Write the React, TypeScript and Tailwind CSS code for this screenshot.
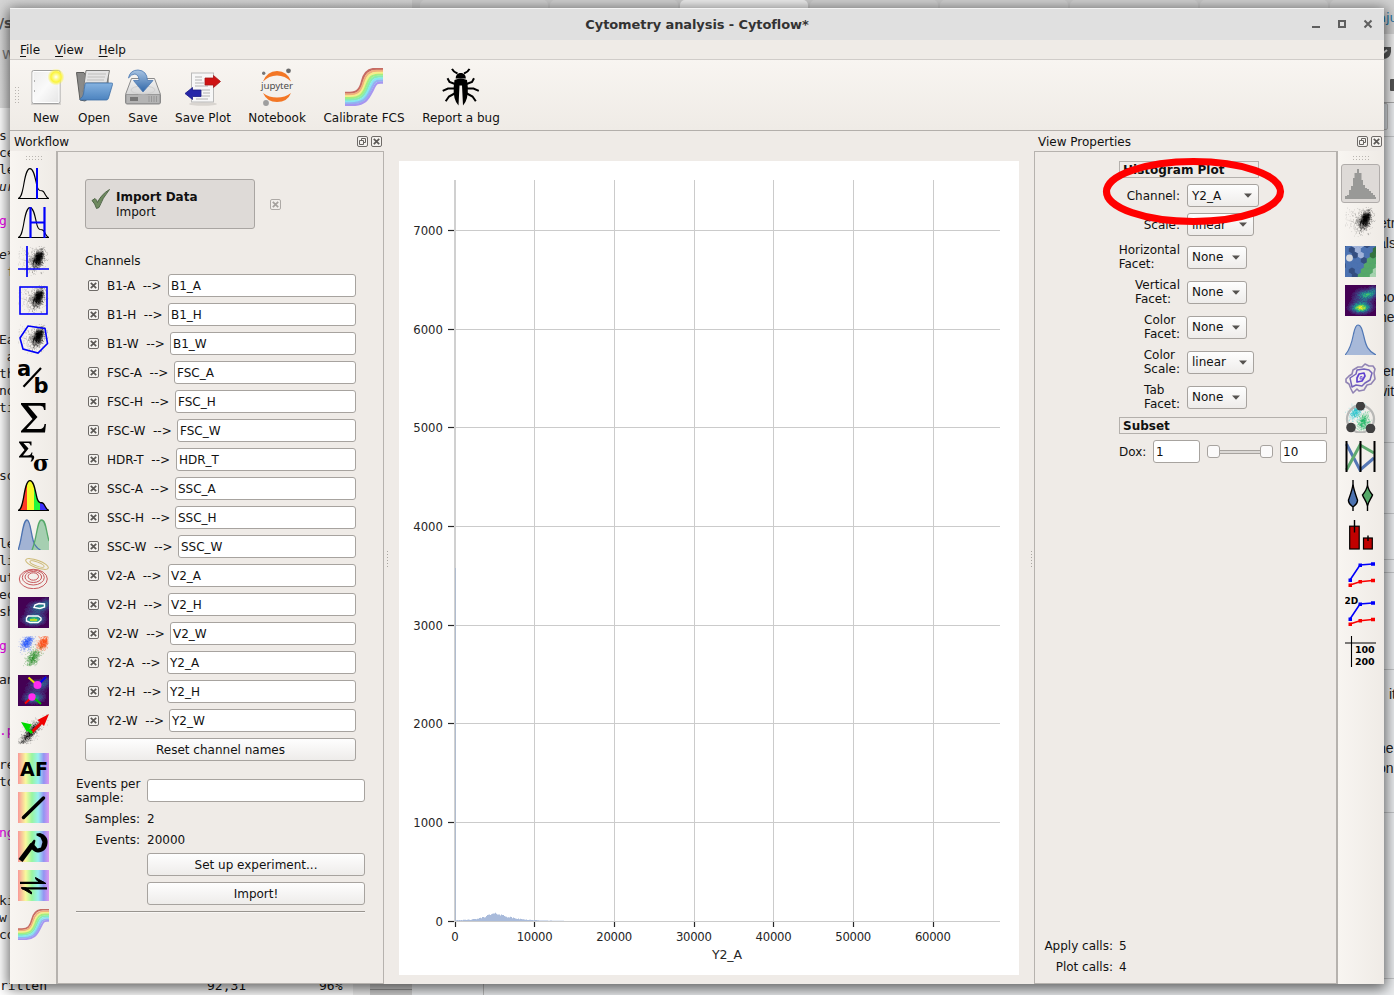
import React from "react";

/* ---------- helpers ---------- */

function makeRandom(seed: number) {
  let s = seed;
  return () => {
    s = (s * 1664525 + 1013904223) % 4294967296;
    return s / 4294967296;
  };
}

type CloudProps = { n: number; cx: number; cy: number; sx: number; sy: number; tilt?: number; color?: string; seed?: number; opacity?: number };

function Cloud({ n, cx, cy, sx, sy, tilt = 0, color = "#000", seed = 7, opacity = 0.45 }: CloudProps) {
  const rnd = makeRandom(seed);
  let d = "";
  for (let i = 0; i < n; i++) {
    const r = Math.sqrt(-2 * Math.log(rnd() + 0.0001));
    const a = rnd() * Math.PI * 2;
    const u = r * Math.cos(a) * sx;
    const v = r * Math.sin(a) * sy;
    const x = cx + u * Math.cos(tilt) - v * Math.sin(tilt);
    const y = cy + u * Math.sin(tilt) + v * Math.cos(tilt);
    if (x < 0 || x > 30 || y < 0 || y > 30) continue;
    d += `M${x.toFixed(1)} ${y.toFixed(1)}h.6`;
  }
  return <path d={d} stroke={color} strokeWidth="0.6" opacity={opacity} fill="none" />;
}

function BlackCloud() {
  return (
    <g>
      <Cloud n={240} cx={15} cy={14} sx={7} sy={7} seed={5} opacity={0.3} />
      <Cloud n={700} cx={19.5} cy={13.5} sx={5} sy={3.2} tilt={-1.2} seed={11} opacity={0.55} />
      <Cloud n={500} cx={20.5} cy={12} sx={3.6} sy={2} tilt={-1.2} seed={23} opacity={0.7} />
    </g>
  );
}

const viridis = [
  [68, 1, 84],
  [65, 52, 124],
  [47, 95, 140],
  [33, 145, 140],
  [53, 183, 121],
  [144, 215, 67],
  [253, 231, 37],
];

function HeatMap({ gain = 1 }: { gain?: number }) {
  const rnd = makeRandom(3);
  const cells: React.ReactNode[] = [];
  const g = (x: number, y: number, cx: number, cy: number, sx: number, sy: number) =>
    Math.exp(-(((x - cx) / sx) ** 2) - ((y - cy) / sy) ** 2);
  for (let y = 0; y < 31; y++)
    for (let x = 0; x < 31; x++) {
      let v = 0.85 * g(x, y, 15, 22.5, 8, 4) + 0.5 * g(x, y, 22, 9, 7, 3.6) + 0.3 * g(x, y, 17, 15, 9, 9) + 0.3 * g(x, y, 28, 5, 4, 4);
      v = Math.min(0.999, Math.max(0, (v + (rnd() - 0.5) * 0.2 * Math.min(1, v * 3)) * gain));
      if (v < 0.05) continue;
      const p = v * 6;
      const i = Math.floor(p);
      const f = p - i;
      const c = viridis[i].map((a, k) => Math.round(a + (viridis[Math.min(6, i + 1)][k] - a) * f));
      cells.push(<rect key={y * 31 + x} x={x} y={y} width="1.05" height="1.05" fill={`rgb(${c.join(",")})`} />);
    }
  return (
    <g>
      <rect width="31" height="31" fill="#440154" />
      {cells}
    </g>
  );
}

function Icon({ children }: { children: React.ReactNode }) {
  return (
    <svg width="31" height="31" viewBox="0 0 31 31" className="block shrink-0 overflow-hidden">
      {children}
    </svg>
  );
}

const curve = "M0 30.5C3 30 4 26 5.5 18C7 9 8.5 .6 12 .6C15.5 .6 17 9 18.5 16C19.3 20 20 22 22 22.5C25.5 22.5 26 24 27.5 27C28.5 29 29.5 30 31 30.5";

function RainbowPad({ children, id }: { children: React.ReactNode; id: string }) {
  return (
    <Icon>
      <defs>
        <linearGradient id={id}>
          <stop offset="0" stopColor="#f99898" />
          <stop offset="0.25" stopColor="#f9f99c" />
          <stop offset="0.45" stopColor="#98f5a0" />
          <stop offset="0.65" stopColor="#98f0f0" />
          <stop offset="0.83" stopColor="#9494f2" />
          <stop offset="1" stopColor="#dd98ee" />
        </linearGradient>
      </defs>
      <rect width="31" height="31" fill={`url(#${id})`} />
      {children}
    </Icon>
  );
}

function RainbowCurve({ size }: { size: number }) {
  const bands = ["#c66b63", "#f0b07c", "#f5ee8a", "#a5ee80", "#86ecb0", "#86e6f0", "#90b4f2", "#a696f0"];
  return (
    <svg width={size} height={size} viewBox="0 0 31 31" className="block">
      {bands.map((c, i) => (
        <path
          key={c}
          d={`M0 ${20.2 + i * 1.45}H4C${10 + i * 0.9} ${20.2 + i * 1.45} ${12.5 + i * 0.9} ${17 + i * 1.25} ${14 + i * 1.15} ${10.5 + i * 1.25}S${19 + i * 0.9} ${0.7 + i * 1.6} ${25 + i * 0.6} ${0.7 + i * 1.6}H31`}
          fill="none"
          stroke={c}
          strokeWidth="1.8"
        />
      ))}
    </svg>
  );
}

/* ---------- operation icons (left toolbar) ---------- */

const leftIcons = [
  <Icon key="threshold">
    <path d={curve} fill="none" stroke="#000" strokeWidth="1.1" />
    <path d="M0 30.5H31" stroke="#000" />
    <path d="M19 0V31" stroke="#0000fa" strokeWidth="2" />
  </Icon>,
  <Icon key="range">
    <path d={curve} fill="none" stroke="#000" strokeWidth="1.1" />
    <path d="M0 30.5H31" stroke="#000" />
    <path d="M12.5 0V31M26.5 0V31M12.5 15.5H26.5" stroke="#0000fa" strokeWidth="2.2" />
  </Icon>,
  <Icon key="quad">
    <BlackCloud />
    <path d="M9 0V31M0 23H31" stroke="#0000fa" strokeWidth="1.7" />
  </Icon>,
  <Icon key="rect">
    <BlackCloud />
    <rect x="2" y="2" width="27" height="27" fill="none" stroke="#0000fa" strokeWidth="1.6" />
  </Icon>,
  <Icon key="poly">
    <BlackCloud />
    <path d="M10 2L27 4.5L29.5 19.5L20 29L5 25L2 14Z" fill="none" stroke="#0000fa" strokeWidth="1.6" />
  </Icon>,
  <Icon key="ratio">
    <text x="-1" y="13" fontSize="21" fontWeight="bold" fontFamily="DejaVu Sans">a</text>
    <text x="15.5" y="30" fontSize="21" fontWeight="bold" fontFamily="DejaVu Sans">b</text>
    <path d="M5.5 23.7L23 5" stroke="#000" strokeWidth="2.2" />
  </Icon>,
  <Icon key="sum">
    <path d="M3 1H27.500V8H26C25.500 4.500 24.500 3.800 21 3.800H10L19.500 15L8.500 27H21C25 27 26 25.500 26.500 22H28L27 30.500H3V29L14.500 17L3 2.500Z" />
  </Icon>,
  <Icon key="stat">
    <path d="M1 .5H13.500V4.500H12.500C12 2.500 11.500 2 9 2H5.500L10.500 7.500L5 14.500H9C12 14.500 13 13.500 13.500 11.500H14.500L13.500 16.500H1V15.500L6.500 9L1 1.500Z" />
    <text x="15" y="30" fontSize="22" fontWeight="bold" fontFamily="DejaVu Serif">σ</text>
    <path d="M13 14.500C16 13.500 18 16.500 14 20.500L12.500 20.500C14 18.500 14 17 13 16Z" />
  </Icon>,
  <Icon key="bins">
    <defs>
      <clipPath id="binClip"><path d={curve} /></clipPath>
    </defs>
    <g clipPath="url(#binClip)">
      <rect width="9" height="31" fill="#ff3a24" />
      <rect x="9" width="7" height="31" fill="#f6fa2a" />
      <rect x="16" width="6" height="31" fill="#24f53c" />
      <rect x="22" width="9" height="31" fill="#3c30fa" />
    </g>
    <path d={curve} fill="none" stroke="#000" strokeWidth="1.3" />
    <path d="M0 30.5H31" stroke="#000" />
  </Icon>,
  <Icon key="gauss1d">
    <path d="M0 31C4 22 4.500 1 9 1C13 1 13 20 17 26C19 29 20 30 22.500 31Z" fill="#a2b3d4" />
    <path d="M14 31C19 20 19 1 23.500 1C28 1 28 12 31 22V31Z" fill="#9dcbab" fillOpacity=".9" />
    <path d="M0 31C4 22 4.500 1 9 1C13 1 13 20 17 26C19 29 20 30 22.500 31" fill="none" stroke="#4c72b0" strokeWidth="1.300" />
    <path d="M14 31C19 20 19 1 23.500 1C28 1 28 12 31 22" fill="none" stroke="#55a868" strokeWidth="1.300" />
  </Icon>,
  <Icon key="gauss2d">
    <g fill="none" stroke="#ccb974" strokeWidth="1">
      <ellipse cx="19" cy="6" rx="12" ry="3.700" transform="rotate(20 19 6)" />
      <ellipse cx="19" cy="6" rx="7.500" ry="2" transform="rotate(20 19 6)" />
    </g>
    <g fill="none" stroke="#c85a5e" strokeWidth="1">
      <ellipse cx="15.300" cy="21" rx="14" ry="9.700" />
      <ellipse cx="15.300" cy="19.500" rx="11" ry="7.500" />
      <ellipse cx="15.300" cy="19" rx="8.300" ry="5.500" />
      <ellipse cx="15.300" cy="18.500" rx="5.200" ry="3.700" />
    </g>
  </Icon>,
  <Icon key="density">
    <HeatMap gain={0.75} />
    <path d="M10 19H20L23 21V23L20 25.500H12L8.500 24V21ZM17 8L21 6.500L26.500 7V10L22 11.500L16 10.500Z" fill="none" stroke="#fff" strokeWidth="1.400" />
    <path d="M12 23H19" stroke="#b8d830" strokeWidth="2" />
  </Icon>,
  <Icon key="kmeans">
    <Cloud n={500} cx={9} cy={7} sx={4} sy={2.6} tilt={-1} color="#2255ff" seed={2} opacity={0.7} />
    <Cloud n={500} cx={25} cy={7} sx={4} sy={2.6} tilt={-1} color="#ff4a10" seed={9} opacity={0.8} />
    <Cloud n={500} cx={15} cy={22} sx={5} sy={2.8} tilt={-1} color="#1e8a1e" seed={4} opacity={0.7} />
  </Icon>,
  <Icon key="flowpeaks">
    <HeatMap gain={0.55} />
    <path d="M10.500 2.500L18 9" stroke="#e8e000" strokeWidth="2" />
    <path d="M21 9L28 2" stroke="#0000f5" strokeWidth="2" />
    <path d="M14 22L7 28.500" stroke="#f00" strokeWidth="2" />
    <path d="M15 22L23 29" stroke="#00c000" strokeWidth="2" />
    <circle cx="19.500" cy="10" r="4" fill="#ff2cf0" />
    <circle cx="14" cy="22" r="3.700" fill="#ff2cf0" />
  </Icon>,
  <Icon key="pca">
    <Cloud n={340} cx={12} cy={19} sx={9} sy={3.4} tilt={-0.85} seed={5} opacity={0.4} />
    <Cloud n={600} cx={13} cy={18} sx={7} sy={1.8} tilt={-0.85} seed={15} opacity={0.7} />
    <path d="M14 18L26 6" stroke="#f00000" strokeWidth="3" />
    <path d="M31 0L19.500 6L26 12Z" fill="#f00000" />
    <path d="M14 19L9 14" stroke="#00dc00" strokeWidth="3" />
    <path d="M3 8L14 10.500L9 18Z" fill="#00dc00" />
  </Icon>,
  <RainbowPad key="af" id="padAf">
    <text x="2" y="22.500" fontSize="19" fontWeight="bold" fontFamily="DejaVu Sans" textLength="28">AF</text>
  </RainbowPad>,
  <RainbowPad key="bleed" id="padBleed">
    <path d="M5.500 25.500L25.500 6" stroke="#000" strokeWidth="3.500" strokeLinecap="round" />
  </RainbowPad>,
  <RainbowPad key="bead" id="padBead">
    <path d="M4 27.500L13 15.500" stroke="#000" strokeWidth="5" strokeLinecap="square" />
    <path d="M11.500 14L16 8.500L17.500 9.500L16.500 14L19.500 17.500L23 16.500L24.500 11L22.500 6.500L18.500 4.500V2.500L22 2C27.500 3.500 30 7.500 29.500 12C29 18 25 21.500 20 21.500C18 21.500 16 20.500 14 18.500Z" />
  </RainbowPad>,
  <RainbowPad key="color" id="padColor">
    <path d="M2 12.800H26M4 18.300H29" stroke="#000" strokeWidth="2.200" fill="none" />
    <path d="M17.500 7.500L28 13.500H23L18 9.500ZM13.500 24L3 17.800H8L13.500 22Z" stroke="#000" />
  </RainbowPad>,
  <RainbowCurve key="calib" size={31} />,
];

/* ---------- view icons (right toolbar) ---------- */

const histIcon = (
  <Icon>
    <path d="M0 31V28H2V27H4V22H6V18H8V10H9.500V5H12V1H14V5H16.500V12H18V17H20V20H22V21H24V23H26V25H28V27H30V29H31V31Z" fill="#999997" />
  </Icon>
);

const hexes: [number, number, string][] = [];
for (let r = 0; r < 7; r++)
  for (let c = 0; c < 7; c++) {
    const x = c * 6 - (r % 2 ? 0 : 3) + 1;
    const y = r * 5.2 - 1;
    const k = x * 0.85 + y * 0.6;
    const col =
      k > 38 ? "#a6d3ae" : k > 30 ? "#55a868" : k > 27 ? "#35733f" : (r * 3 + c * 5) % 4 === 0 ? "#344e80" : x > 4 && x < 18 && y < 13 ? "#a0b3d9" : "#4c72b0";
    hexes.push([x, y, col]);
  }

const trendLines = (
  <g>
    <path d="M5 22L15 7L27.500 6" fill="none" stroke="#0000fa" strokeWidth="1.600" />
    <path d="M3.500 20.500h3.500v3.500h-3.500zM13.500 5.500h3.500v3.500h-3.500zM26 4.300h4v3.500h-4z" fill="#0000fa" />
    <path d="M5 27L15 23.800L27.500 22.500" fill="none" stroke="#fa0000" strokeWidth="1.600" />
    <path d="M3.500 25.500h3.500v3.500h-3.500zM13.500 22h3.500v3.500h-3.500zM26 20.800h4v3.500h-4z" fill="#fa0000" />
  </g>
);

const rightIcons = [
  <Icon key="scatter"><BlackCloud /></Icon>,
  <Icon key="hex">
    <rect width="31" height="31" fill="#4c72b0" />
    {hexes.map(([x, y, c], i) => (
      <path key={i} d={`M${x} ${y - 3.6}l3.200 1.800v3.600l-3.200 1.800l-3.200-1.800v-3.600z`} fill={c} />
    ))}
    <circle cx="4.500" cy="12" r="3.400" fill="#d8dade" />
  </Icon>,
  <Icon key="heat"><HeatMap /></Icon>,
  <Icon key="kde">
    <path d="M0 31C5 26 7 18 8.500 10C10 3 11 1 13 1C16 1 17 5 19 13C21 22 23 27 31 31Z" fill="#a7b9d9" />
    <path d="M0 31C5 26 7 18 8.500 10C10 3 11 1 13 1C16 1 17 5 19 13C21 22 23 27 31 31" fill="none" stroke="#5077b5" strokeWidth="1.200" />
  </Icon>,
  <Icon key="contour">
    <g fill="none" strokeLinejoin="round">
      <path d="M1 16L4 13L7 11L8 7L13 4L17 4L20 1L24 3L28 3L30 6L29 10L30 16L26 21L22 22L19 27L14 28L12 26L8 30L6 26L4 21L1 19Z" stroke="#9184b4" strokeWidth="1.600" />
      <path d="M5 15L11 11L12 7L19 6L24 7L27 10L25 17L20 20L17 23L11 22L7 24Z" stroke="#7564ba" strokeWidth="1.500" />
      <path d="M14 11L19 10L20 13L17 18L12 19L12 15Z" stroke="#5f40d0" strokeWidth="1.700" />
      <path d="M15.500 13.500H17V16H15Z" stroke="#5f40d0" strokeWidth=".8" />
    </g>
  </Icon>,
  <Icon key="radviz">
    <Cloud n={420} cx={11} cy={10} sx={4.6} sy={2.6} tilt={-1} color="#1fc4cf" seed={2} opacity={0.8} />
    <Cloud n={420} cx={18} cy={20} sx={4} sy={2.8} tilt={-1.2} color="#18b860" seed={8} opacity={0.8} />
    <circle cx="15.500" cy="17" r="13.500" fill="none" stroke="#b8b8b6" strokeWidth="2.300" />
    <circle cx="15.500" cy="4" r="4.600" fill="#404040" />
    <circle cx="6" cy="25.500" r="4.800" fill="#404040" />
    <circle cx="25.500" cy="26.500" r="4.800" fill="#404040" />
  </Icon>,
  <Icon key="parallel">
    <path d="M1.500 3L15 29L29 17" stroke="#5577b5" strokeWidth="3" fill="none" />
    <path d="M1.500 29L15 4L29 12" stroke="#5faa70" strokeWidth="3" fill="none" />
    <path d="M1.500 0V31M15.500 0V31M29.500 0V31" stroke="#000" strokeWidth="2" />
  </Icon>,
  <Icon key="violin">
    <path d="M8 0V4C8.500 9 10 13 12.500 20C13 24 9 26 8 27V31M8 0V4C7.500 9 6 13 3.500 20C3 24 7 26 8 27" fill="#4c72b0" stroke="#000" strokeWidth="1.400" />
    <path d="M22.500 0V5C23 9 25 12 27.500 15C26 19 23.500 21 22.500 26V31M22.500 0V5C22 9 20 12 17.500 15C19 19 21.500 21 22.500 26" fill="#55a868" stroke="#000" strokeWidth="1.400" />
  </Icon>,
  <Icon key="bar">
    <rect x="4.700" y="7.200" width="9.500" height="22.800" fill="#c00000" stroke="#000" strokeWidth="1.200" />
    <rect x="18.500" y="19" width="8.800" height="11" fill="#c00000" stroke="#000" strokeWidth="1.200" />
    <path d="M9.500 1V13.500M23 16.500V22" stroke="#000" strokeWidth="1.400" />
  </Icon>,
  <Icon key="stats1d">{trendLines}</Icon>,
  <Icon key="stats2d">
    <text x="-.5" y="7" fontSize="9" fontWeight="bold" fontFamily="DejaVu Sans">2D</text>
    {trendLines}
  </Icon>,
  <Icon key="table">
    <path d="M0 7H31M6.500 0V31" stroke="#000" strokeWidth="1.100" />
    <text x="10" y="17" fontSize="9.500" fontWeight="bold" fontFamily="DejaVu Sans" textLength="19.500">100</text>
    <text x="10" y="28.500" fontSize="9.500" fontWeight="bold" fontFamily="DejaVu Sans" textLength="19.500">200</text>
  </Icon>,
];

/* ---------- main toolbar icons ---------- */

const NewIcon = (
  <svg width="36" height="38" viewBox="0 0 36 38" className="block">
    <defs>
      <linearGradient id="pageG" x1="0" y1="0" x2="1" y2="1"><stop offset="0" stopColor="#ececec" /><stop offset=".5" stopColor="#fafafa" /><stop offset="1" stopColor="#e4e4e4" /></linearGradient>
      <radialGradient id="sunG"><stop offset="0" stopColor="#fff" /><stop offset=".25" stopColor="#fdfca0" /><stop offset=".6" stopColor="#fbf43c" /><stop offset="1" stopColor="#fbf43c" stopOpacity="0" /></radialGradient>
    </defs>
    <rect x="3" y="35" width="30" height="2" fill="#d6d3cf" />
    <rect x="4" y="2.500" width="28" height="33" rx="1.500" fill="url(#pageG)" stroke="#a0a0a0" />
    <rect x="5" y="3.500" width="26" height="31" rx="1" fill="none" stroke="#fff" />
    <path d="M6.500 12v2M6.500 22v2" stroke="#b0b0b0" />
    <circle cx="28" cy="9" r="8.500" fill="url(#sunG)" />
  </svg>
);

const OpenIcon = (
  <svg width="38" height="38" viewBox="0 0 38 38" className="block">
    <defs>
      <linearGradient id="foldG" x1="0" y1="0" x2="0" y2="1"><stop offset="0" stopColor="#86b3e0" /><stop offset="1" stopColor="#4c83bf" /></linearGradient>
    </defs>
    <path d="M1.500 4.500H9L10.500 7H33V16L10 33L5 32Z" fill="#8a8a88" stroke="#5d5d5b" />
    <path d="M11 2.500L34.500 2.500L31 20L8 24Z" fill="#e4e4e4" stroke="#7b7b79" />
    <path d="M13 6H31M12.500 9H30M12 12H29" stroke="#bdbdbb" strokeWidth="1.200" />
    <path d="M7 30L10 15H33" fill="none" stroke="#888" />
    <path d="M10 16.500C10.300 15.500 10.500 15 12 15H36.500C37.500 15 38 15.500 37.500 16.500L33.500 30C33 31.500 32.500 32 31 32H6C5 32 4.500 31 5.500 30.500Q8 29 8.500 26Z" fill="url(#foldG)" stroke="#3e6ea6" strokeWidth=".8" />
  </svg>
);

const SaveIcon = (
  <svg width="38" height="38" viewBox="0 0 38 38" className="block">
    <defs>
      <linearGradient id="diskG" x1="0" y1="0" x2="0" y2="1"><stop offset="0" stopColor="#f4f4f4" /><stop offset="1" stopColor="#c2c2c2" /></linearGradient>
      <linearGradient id="arrG" x1="0" y1="0" x2="0" y2="1"><stop offset="0" stopColor="#a8c4e2" /><stop offset="1" stopColor="#2f66a8" /></linearGradient>
    </defs>
    <path d="M7.500 10.500H30.500L36.500 26.500V34Q36.500 36 35 36H3Q1.500 36 1.500 34V26.500Z" fill="url(#diskG)" stroke="#8b8b8b" />
    <path d="M2 26.500H36V34.500Q36 35.500 35 35.500H3Q2 35.500 2 34.500Z" fill="#b4b4b4" stroke="#888" strokeWidth=".7" />
    <ellipse cx="19" cy="22" rx="12" ry="4" fill="none" stroke="#cfcfcf" />
    <path d="M6 29H14V33H6Z" fill="#777" />
    <path d="M25 28V34M27.500 28V34M30 28V34M32.500 28V34" stroke="#989898" />
    <path d="M4.500 10Q6 2 14 2Q23 2.500 23.500 12.500H29L19 24L9.500 12.500H15Q15 7 11 6Q7.500 6 4.500 10Z" fill="url(#arrG)" stroke="#4b78b2" strokeWidth=".8" />
  </svg>
);

const SavePlotIcon = (
  <svg width="38" height="38" viewBox="0 0 38 38" className="block">
    <ellipse cx="19" cy="36" rx="14" ry="1.800" fill="#d9d5d0" />
    <rect x="7.500" y="5" width="22" height="29" fill="#f7f7f7" stroke="#b9b9b9" />
    <path d="M11 9H18M11 12H18M11 15H20M11 18H24M17 22H26M19 25H26M17 28H26M12 31H24" stroke="#b3b3b3" strokeWidth="1.100" />
    <path d="M21 10H29.500V7.500L36.500 13.500L29.500 19.500V17H21Z" fill="#cf1414" stroke="#a61818" strokeWidth=".8" />
    <path d="M17 22H8.500V19.500L1 25.500L8.500 31.500V28.500H17Z" fill="#2626a8" stroke="#1c1c86" strokeWidth=".8" />
  </svg>
);

const JupyterIcon = (
  <svg width="36" height="38" viewBox="0 0 36 38" className="block">
    <path d="M4 13.500Q8 3 18 3Q28.500 3 32 13.500Q26 7.500 18 7.500Q10 7.500 4 13.500ZM4 25Q8 34 18 34Q28.500 34 32 25Q26 29.500 18 29.500Q10 29.500 4 25Z" fill="#f37726" />
    <circle cx="29.500" cy="2.800" r="2.400" fill="#6b6b6b" />
    <circle cx="4.700" cy="5.300" r="1.700" fill="#767677" />
    <circle cx="7" cy="35" r="2.900" fill="#9e9e9e" />
    <text x="2" y="20.800" fontSize="9.800" fontFamily="Noto Sans" fill="#4e4e4e" textLength="32">jupyter</text>
  </svg>
);

const BugIcon = (
  <svg width="38" height="38" viewBox="0 0 38 38" className="block">
    <g stroke="#000" strokeWidth="2" fill="none">
      <path d="M10 .8Q11.500 4 15.500 5.500M27.500 .8Q26 4 22 5.500M13 16L7.500 14L5.500 10.300M24.500 16L30 14L32 10.300M12.500 20.500L6 20.500L.7 22.800M25 20.500L31.500 20.500L36.800 22.800M13.500 25L7 28.500L3.700 33.200M24 25L30.500 28.500L33.800 33.200" />
    </g>
    <path d="M13.700 10.500C13.500 3.200 24 3.200 23.800 10.500Z" />
    <path d="M12.500 12Q18.700 9 25 12L25.800 19Q26.500 32 21 37.500L20 17.500H17.500L16.500 37.500Q11 32 11.700 19Z" />
  </svg>
);

const toolbar = [
  { label: "New", icon: NewIcon, cls: "w-[46px]" },
  { label: "Open", icon: OpenIcon, cls: "w-[50px]" },
  { label: "Save", icon: SaveIcon, cls: "w-[48px]" },
  { label: "Save Plot", icon: SavePlotIcon, cls: "w-[72px]" },
  { label: "Notebook", icon: JupyterIcon, cls: "w-[76px]" },
  { label: "Calibrate FCS", icon: <RainbowCurve size={38} />, cls: "w-[98px]" },
  { label: "Report a bug", icon: BugIcon, cls: "w-[96px]" },
];

/* ---------- small widgets ---------- */

function CloseBox({ faded = false }: { faded?: boolean }) {
  return (
    <svg width="11" height="11" viewBox="0 0 11 11" className={faded ? "block shrink-0 opacity-50" : "block shrink-0"}>
      <rect x=".5" y=".5" width="10" height="10" rx="1.500" fill="#f4f2ef" stroke="#6e6a67" />
      <path d="M2.800 2.800L8.200 8.200M8.200 2.800L2.800 8.200" stroke="#5b5855" strokeWidth="1.700" />
    </svg>
  );
}

function FloatBox() {
  return (
    <svg width="11" height="11" viewBox="0 0 11 11" className="block shrink-0">
      <rect x=".5" y=".5" width="10" height="10" rx="1.500" fill="#f4f2ef" stroke="#6e6a67" />
      <path d="M4.500 4.500V2.500H8.500V6.500H6.500M2.500 4.500H6.500V8.500H2.500Z" fill="none" stroke="#66625f" />
    </svg>
  );
}

function DockTitle({ text }: { text: string }) {
  return (
    <div className="flex h-5 shrink-0 items-center pl-1 pr-[2px]">
      <span className="flex-1 pt-[2px]">{text}</span>
      <div className="flex gap-[3px]">
        <FloatBox />
        <CloseBox />
      </div>
    </div>
  );
}

function Grip({ vertical = false }: { vertical?: boolean }) {
  const dots = [0, 1, 2, 3, 4, 5];
  return vertical ? (
    <svg width="5" height="17" className="block" fill="#b9b5b0">
      {dots.map((i) => <path key={i} d={`M0 ${i * 3}h1v1h-1zM3 ${i * 3}h1v1h-1z`} />)}
    </svg>
  ) : (
    <svg width="17" height="4" className="block" fill="#b9b5b0">
      {dots.map((i) => <path key={i} d={`M${i * 3} 0h1v1h-1zM${i * 3} 3h1v1h-1z`} />)}
    </svg>
  );
}

function SplitGrip() {
  return (
    <svg width="1" height="16" className="block" fill="#aaa6a1">
      {[0, 1, 2, 3, 4, 5].map((i) => <rect key={i} y={i * 3} width="1" height="1" />)}
    </svg>
  );
}

function Field({ children, className = "" }: { children?: React.ReactNode; className?: string }) {
  return (
    <div className={`flex h-[23px] items-center rounded-[3px] border border-[#a7a39f] bg-white pl-[2px] ${className}`}>{children}</div>
  );
}

function Button({ children, className = "" }: { children: React.ReactNode; className?: string }) {
  return (
    <div className={`flex h-[23px] items-center justify-center rounded-[3px] border border-[#a7a39f] bg-linear-to-b from-[#fefefe] to-[#eeecea] ${className}`}>
      {children}
    </div>
  );
}

function Combo({ value, className }: { value: string; className: string }) {
  return (
    <div className={`flex h-[23px] items-center justify-between rounded-[3px] border border-[#a7a39f] bg-linear-to-b from-[#fefefe] to-[#eeecea] pl-1 pr-[6px] ${className}`}>
      <span>{value}</span>
      <svg width="8" height="5" className="block"><path d="M0 .5H8L4 4.800Z" fill="#55524f" /></svg>
    </div>
  );
}

/* ---------- panels ---------- */

const channels: [string, number][] = [
  ["B1-A", 61], ["B1-H", 61], ["B1-W", 63], ["FSC-A", 67], ["FSC-H", 68], ["FSC-W", 70], ["HDR-T", 69], ["SSC-A", 68],
  ["SSC-H", 68], ["SSC-W", 71], ["V2-A", 61], ["V2-H", 61], ["V2-W", 63], ["Y2-A", 60], ["Y2-H", 60], ["Y2-W", 62],
];

function WorkflowPanel() {
  return (
    <div className="flex flex-1 flex-col border-y border-r border-[#b6b2ae] pl-[18px] pr-[18px]">
      <div className="ml-[9px] mt-[27px] flex items-center gap-[15px]">
        <div className="flex h-[50px] w-[170px] rounded-[3px] border border-[#a9a5a2] bg-[#dedad7] pl-[5px] pt-[9px]">
          <svg width="20" height="20" viewBox="0 0 20 20" className="block shrink-0">
            <path d="M1 11.500L4 9.500Q6 11 6.500 13.500Q10 5.500 18.500 0.500Q11.500 9 8 18.500L5.500 19.500Q4 14.500 1 11.500Z" fill="#6f8a5f" stroke="#4a5f42" strokeWidth=".9" />
          </svg>
          <div className="ml-[5px] pt-[1px] leading-[15px]">
            <div className="font-bold">Import Data</div>
            <div>Import</div>
          </div>
        </div>
        <CloseBox faded />
      </div>
      <div className="ml-[9px] mt-[24px] h-[16px] leading-[16px]">Channels</div>
      <div className="ml-[12px] mt-[5px] flex flex-col gap-[6px]">
        {channels.map(([name, w]) => (
          <div key={name} className="flex h-[23px] items-center">
            <CloseBox />
            <div className="ml-2 shrink-0 whitespace-pre" style={{ width: w }}>{`${name}  -->`}</div>
            <Field className="mr-[9px] flex-1">{name.replace("-", "_")}</Field>
          </div>
        ))}
      </div>
      <Button className="ml-[9px] mr-[9px] mt-[6px]">Reset channel names</Button>
      <div className="mt-[16px] flex h-[28px]">
        <div className="w-[71px] leading-[14px]">Events per<br />sample:</div>
        <Field className="mt-[2px] flex-1" />
      </div>
      <div className="mt-[5px] flex h-[18px] items-center gap-[7px]">
        <span className="w-[64px] text-right">Samples:</span><span>2</span>
      </div>
      <div className="mt-[3px] flex h-[18px] items-center gap-[7px]">
        <span className="w-[64px] text-right">Events:</span><span>20000</span>
      </div>
      <Button className="ml-[71px] mt-[4px]">Set up experiment...</Button>
      <Button className="ml-[71px] mt-[6px]">Import!</Button>
      <div className="mt-[6px] h-[2px] border-t border-[#98948f] bg-[#f8f6f4]" />
    </div>
  );
}

const facets: [string[], string, string][] = [
  [["Horizontal", "Facet:"], "None", "w-[60px]"],
  [["Vertical", "Facet:"], "None", "w-[60px]"],
  [["Color", "Facet:"], "None", "w-[60px]"],
  [["Color", "Scale:"], "linear", "w-[67px]"],
  [["Tab", "Facet:"], "None", "w-[60px]"],
];

function ViewPanel() {
  return (
    <div className="flex flex-1 flex-col border-y border-l border-[#b6b2ae] pl-[84px] pr-[9px]">
      <div className="mt-[9px] h-[17px] w-[140px] border border-[#b4b0ac] pl-[3px] font-bold leading-[16px]">Histogram Plot</div>
      <div className="mt-[6px] flex h-[23px] items-center gap-[7px]">
        <span className="w-[61px] whitespace-nowrap text-right">Channel:</span>
        <Combo value="Y2_A" className="w-[72px]" />
      </div>
      <div className="mt-[6px] flex h-[23px] items-center gap-[7px]">
        <span className="w-[61px] text-right">Scale:</span>
        <Combo value="linear" className="w-[67px]" />
      </div>
      <div className="mt-[7px] flex flex-col gap-[7px]">
        {facets.map(([label, value, cls], i) => (
          <div key={i} className="flex h-[28px] items-center gap-[7px]">
            <div className="flex w-[61px] justify-end leading-[14px]">
              <div>{label[0]}<br />{label[1]}</div>
            </div>
            <Combo value={value} className={cls} />
          </div>
        ))}
      </div>
      <div className="mt-[6px] h-[17px] border border-[#b4b0ac] pl-[3px] font-bold leading-[16px]">Subset</div>
      <div className="mt-[6px] flex h-[23px] items-center">
        <span className="w-[34px]">Dox:</span>
        <Field className="w-[47px]">1</Field>
        <div className="ml-[7px] flex w-[66px] items-center">
          <div className="h-[13px] w-[13px] rounded-[3px] border border-[#a7a39f] bg-[#fbfafa]" />
          <div className="h-[4px] flex-1 border-y border-[#a7a39f] bg-[#dcd9d6]" />
          <div className="h-[13px] w-[13px] rounded-[3px] border border-[#a7a39f] bg-[#fbfafa]" />
        </div>
        <Field className="ml-[7px] w-[47px]">10</Field>
      </div>
      <div className="-ml-[78px] mt-auto mb-[7px] flex flex-col gap-[3px]">
        {[["Apply calls:", "5"], ["Plot calls:", "4"]].map(([k, v]) => (
          <div key={k} className="flex h-[18px] items-center gap-[6px]">
            <span className="w-[72px] whitespace-nowrap text-right">{k}</span><span>{v}</span>
          </div>
        ))}
      </div>
    </div>
  );
}

/* ---------- plot ---------- */

function histogramPath() {
  const rnd = makeRandom(42);
  let d = "M56 760";
  for (let x = 56; x < 165; x++) {
    const main = 4.4 * Math.exp(-(((x - 96) / 13) ** 2)) + 2.2 * Math.exp(-(((x - 106) / 26) ** 2)) + (x < 100 ? 0.8 : 0.2);
    const h = Math.max(0, main + (rnd() - 0.4) * Math.min(1.8, main * 0.4));
    d += `V${(760 - h).toFixed(1)}H${x + 1}`;
  }
  return d + "V760Z";
}

function Plot() {
  return (
    <svg width="620" height="814" className="block bg-white" fontFamily="DejaVu Sans" fontSize="11.700" fill="#262626">
      {[0, 1, 2, 3, 4, 5, 6].map((i) => {
        const x = Math.floor(56 + i * 79.7) + 0.5;
        return (
          <g key={i}>
            {i > 0 && <path d={`M${x} 19V760`} stroke="#cbcbcb" />}
            <path d={`M${x} 761V766`} stroke="#262626" strokeWidth="1.200" />
            <text x={56 + i * 79.65} y="780" textAnchor="middle" textLength={i ? 36 : undefined}>{i * 10000}</text>
          </g>
        );
      })}
      {[0, 1, 2, 3, 4, 5, 6, 7].map((i) => {
        const y = Math.floor(760 - i * 98.64) + 0.5;
        return (
          <g key={i}>
            {i > 0 && <path d={`M56 ${y}H601`} stroke="#cbcbcb" />}
            <path d={`M49 ${y}H55`} stroke="#262626" strokeWidth="1.200" />
            <text x="44" y={y + 4} textAnchor="end">{i * 1000}</text>
          </g>
        );
      })}
      <path d={histogramPath()} fill="#a9bbdb" />
      <path d="M56 19V761" stroke="#cbcbcb" strokeWidth="1.800" />
      <path d="M56.500 407V760" stroke="#b0bccf" strokeWidth="1" />
      <path d="M55 760.500H601" stroke="#cbcbcb" strokeWidth="1.200" />
      <text x="328" y="798" textAnchor="middle" fontSize="12.500" textLength="30">Y2_A</text>
    </svg>
  );
}

/* ---------- desktop behind the window ---------- */

const termLines: [number, string, string][] = [
  [135, "s", ""], [152, "ce", ""], [169, "le", ""], [186, "ur", "italic"], [220, "g", "text-[#f000f0]"], [254, "e*", "italic"], [271, " f", "text-[#b08030]"],
  [339, "Ea", ""], [356, " a", ""], [373, "th", ""], [390, "no", ""], [407, "ti", ""], [475, "so", ""], [543, "le", ""], [560, "li", ""], [577, "ut", ""],
  [594, "ec", ""], [611, "sh", ""], [645, "g", "text-[#f000f0]"], [679, "an", ""], [730, ".p", "text-[#f000f0]"], [764, "re", ""], [781, "to", ""],
  [832, "ng", "text-[#f000f0]"], [900, "ki", ""], [917, "w", ""], [934, "co", ""],
];

const pageLines: [number, number, string][] = [
  [1379, 223, "etr"], [1378, 243, "als"], [1379, 297, "oo"], [1379, 317, "ne"], [1383, 371, "en"], [1377, 391, "wit"], [1389, 694, "it"], [1378, 748, "ne"], [1378, 768, "on"],
];

const rules = [136, 442, 513, 559, 572, 669, 812, 978];

function Desktop() {
  return (
    <div className="absolute inset-0 bg-[#eceef0]">
      <div className="absolute left-0 top-0 h-[995px] w-[412px] bg-white">
        <div className="h-[108px] bg-linear-to-b from-[#d6d6d6] to-[#dedede]" />
        <div className="absolute -left-px top-[13px] text-[14px] font-bold text-[#555]">/s</div>
        <div className="absolute left-[2px] top-[45px] text-[13px] text-[#777]">W</div>
        <div className="absolute left-[353px] top-[980px] h-[15px] w-[17px] bg-[#eeeeee]" />
        <div className="absolute left-[370px] top-[980px] h-[15px] w-[42px] bg-[#cfcfcf]" />
        <div className="absolute left-[370px] top-[989px] h-px w-[42px] bg-[#999]" />
        {termLines.map(([y, t, cls]) => (
          <div key={y} style={{ top: y - 8 }} className={`absolute -left-px whitespace-pre font-['DejaVu_Sans_Mono',monospace] text-[13px] leading-[17px] text-[#222] ${cls}`}>{t}</div>
        ))}
        <div className="absolute left-0 top-[977px] flex whitespace-pre font-['DejaVu_Sans_Mono',monospace] text-[13px] leading-[17px] text-[#111]">
          <span className="w-[207px]">ritten</span>
          <span className="w-[112px]">92,31</span>
          <span>96%</span>
        </div>
      </div>
      <div className="absolute left-[412px] top-0 h-[8px] w-[982px] bg-[#c9c9c9]" />
      <div className="absolute left-[412px] top-0 flex h-[8px] w-[982px] gap-[2px] pl-[8px]">
        {[0, 1, 2, 3, 4, 5, 6, 7].map((i) => (
          <div key={i} className={i === 2 ? "h-[8px] w-[128px] shrink-0 rounded-t-[5px] bg-[#ededed]" : "h-[8px] w-[128px] shrink-0 rounded-t-[5px] bg-[#d2d2d2]"} />
        ))}
      </div>
      <div className="absolute left-[1384px] top-0 h-[34px] w-[10px] bg-[#d2d2d2]" />
      <div className="absolute left-[1384px] top-[34px] h-[69px] w-[10px] border-b border-[#aaa] bg-[#eeeeee]" />
      <div className="absolute left-[1378px] top-[8px] text-[13px] text-[#2277a8]">aju</div>
      <svg width="12" height="16" viewBox="0 0 12 16" className="absolute left-[1380px] top-[46px]">
        <path d="M0 1H11V6Q10 13 3 13L0 13Z" fill="#555" /><path d="M2 8L7 4" stroke="#eee" strokeWidth="2" />
      </svg>
      <div className="absolute left-[1390px] top-[79px] h-[12px] w-[4px] rounded-l-[1px] bg-[#555]" />
      <div className="absolute left-[1380px] top-[103px] h-[27px] w-[8px] rounded-[2px] border border-[#bbb] bg-[#dde2e6]" />
      {rules.map((y) => <div key={y} style={{ top: y }} className="absolute left-[1384px] h-px w-[10px] bg-[#c4c6c8]" />)}
      {pageLines.map(([x, y, t]) => (
        <div key={y} style={{ left: x, top: y - 10 }} className="absolute font-['Liberation_Sans',sans-serif] text-[14px] leading-[20px] text-[#222]">{t}</div>
      ))}
      <div className="absolute left-[483px] top-[984px] h-[11px] w-px bg-[#bbb]" />
    </div>
  );
}

/* ---------- application ---------- */

export default function App() {
  return (
    <div className="relative h-[995px] w-[1394px] overflow-hidden font-['DejaVu_Sans',sans-serif] text-[12px] text-[#111]">
      <Desktop />
      <div className="absolute left-[10px] top-[8px] flex h-[976px] w-[1374px] flex-col rounded-t-[2px] bg-[#efebe7] shadow-[0_3px_14px_2px_rgba(0,0,0,0.6)]">
        <div className="flex h-[32px] shrink-0 items-center border-t border-[#f3f3f3] bg-[#e0e0e0]">
          <div className="w-[80px]" />
          <div className="flex-1 text-center text-[13px] font-bold tracking-[-0.1px] text-[#333]">Cytometry analysis - Cytoflow*</div>
          <svg width="80" height="14" className="block" fill="none" stroke="#5f5f5f" strokeWidth="2">
            <path d="M8 9H16" />
            <rect x="35" y="3" width="6" height="6" />
            <path d="M60.500 2.500L67.500 9.500M67.500 2.500L60.500 9.500" />
          </svg>
        </div>
        <div className="flex h-[20px] shrink-0 items-center gap-[15px] border-b border-[#d0ccc9] pl-[10px]">
          <span><span className="underline underline-offset-2">F</span>ile</span>
          <span><span className="underline underline-offset-2">V</span>iew</span>
          <span><span className="underline underline-offset-2">H</span>elp</span>
        </div>
        <div className="flex h-[71px] shrink-0 border-b border-[#b3afab] bg-linear-to-b from-[#f8f5f1] to-[#efebe6] pl-[5px]">
          <div className="w-[8px] pt-[27px]"><Grip vertical /></div>
          {toolbar.map((t) => (
            <div key={t.label} className={`flex flex-col items-center whitespace-nowrap pt-[8px] ${t.cls}`}>
              {t.icon}
              <span className="mt-[4px] leading-[16px]">{t.label}</span>
            </div>
          ))}
        </div>
        <div className="flex min-h-0 flex-1">
          <div className="flex w-[374px] flex-col">
            <DockTitle text="Workflow" />
            <div className="flex min-h-0 flex-1">
              <div className="flex w-[48px] flex-col items-center gap-2 border-r-2 border-[#b6b2ae] bg-linear-to-r from-[#f8f5f1] to-[#efebe6] pt-[5px]">
                <div className="ml-[3px]"><Grip /></div>
                {leftIcons}
              </div>
              <WorkflowPanel />
            </div>
          </div>
          <div className="flex w-[15px] items-center pl-[3px] pt-[2px]"><SplitGrip /></div>
          <div className="pt-[30px]"><Plot /></div>
          <div className="flex w-[15px] items-center pl-[12px] pt-[2px]"><SplitGrip /></div>
          <div className="flex flex-1 flex-col">
            <DockTitle text="View Properties" />
            <div className="flex min-h-0 flex-1">
              <ViewPanel />
              <div className="flex w-[48px] flex-col items-center gap-2 border-l-2 border-[#b6b2ae] bg-linear-to-r from-[#f8f5f1] to-[#efebe6] pr-[2px] pt-[5px]">
                <div className="ml-[2px]"><Grip /></div>
                <div className="-mb-[4px] -mt-[4px] flex h-[39px] w-[39px] items-center justify-center rounded-[3px] border border-[#b0acaa] bg-[#dedad7]">{histIcon}</div>
                {rightIcons}
              </div>
            </div>
          </div>
        </div>
      </div>
      <svg width="190" height="74" viewBox="0 0 190 74" className="absolute left-[1099px] top-[154px]">
        <ellipse cx="94.500" cy="37.500" rx="87" ry="30" fill="none" stroke="#ff0000" strokeWidth="7.200" />
      </svg>
    </div>
  );
}
